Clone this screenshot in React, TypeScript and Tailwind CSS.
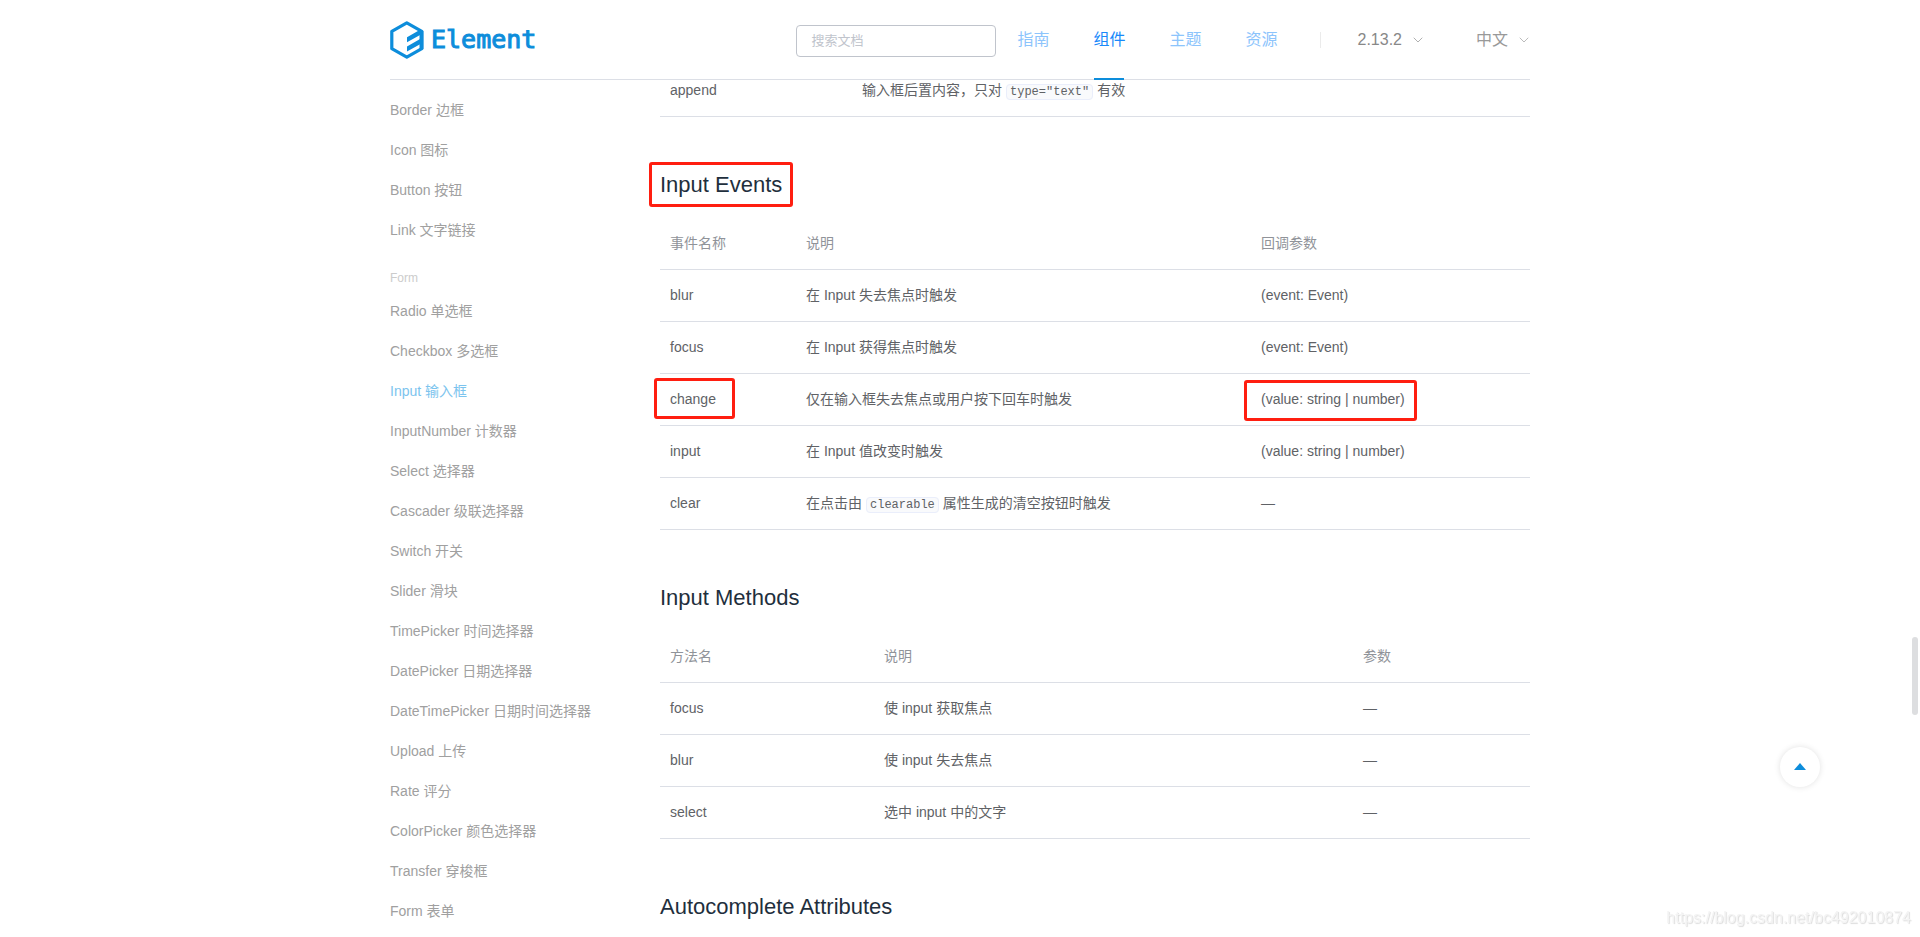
import React from 'react';
import { ChevronDown } from 'lucide-react';
import clsx from 'clsx';

interface DocTableProps {
  head?: string[];
  rows: React.ReactNode[][];
  // width classes for each column
  cols: string[];
}

const NAV = [
  { name: '指南' },
  { name: '组件', active: true },
  { name: '主题' },
  { name: '资源' },
];

const BASIC = ['Border 边框', 'Icon 图标', 'Button 按钮', 'Link 文字链接'];

const FORM = [
  'Radio 单选框',
  'Checkbox 多选框',
  'Input 输入框',
  'InputNumber 计数器',
  'Select 选择器',
  'Cascader 级联选择器',
  'Switch 开关',
  'Slider 滑块',
  'TimePicker 时间选择器',
  'DatePicker 日期选择器',
  'DateTimePicker 日期时间选择器',
  'Upload 上传',
  'Rate 评分',
  'ColorPicker 颜色选择器',
  'Transfer 穿梭框',
  'Form 表单',
];

const ACTIVE_ITEM = 'Input 输入框';

const Code = ({ children }: { children: React.ReactNode }) => (
  <code className="mx-1 rounded border border-[#eaeefb] bg-[#f9fafc] px-[3px] font-['Liberation_Mono',monospace] text-xs">
    {children}
  </code>
);

// Red frame around the marked text
const Mark = ({ frame, children }: { frame: string; children: React.ReactNode }) => (
  <span className="relative inline-block">
    {children}
    <span className={clsx('pointer-events-none absolute rounded-[3px] border-3 border-[#ff1e10]', frame)} />
  </span>
);

const DocTable = ({ head, rows, cols }: DocTableProps) => (
  <table className="w-full table-fixed border-collapse text-left text-sm leading-[21px]">
    <colgroup>
      {cols.map((c, i) => <col key={i} className={c} />)}
    </colgroup>
    {head && (
      <thead>
        <tr className="border-b border-[#dcdfe6]">
          {head.map(h => (
            <th key={h} className="px-[10px] py-[15px] font-normal text-[#909399]">{h}</th>
          ))}
        </tr>
      </thead>
    )}
    <tbody className="text-[#606266]">
      {rows.map((row, i) => (
        <tr key={i} className="border-b border-[#dcdfe6]">
          {row.map((cell, j) => (
            <td key={j} className={clsx('px-[10px] pb-[15px]', head && 'pt-[15px]')}>{cell}</td>
          ))}
        </tr>
      ))}
    </tbody>
  </table>
);

const Title = ({ children }: { children: React.ReactNode }) => (
  <h3 className="mt-[55px] mb-5 text-[22px] leading-[26px] text-[#1f2f3d]">{children}</h3>
);

const Logo = () => (
  <a href="#" className="flex items-center gap-[7px] text-[#0d8ddb]">
    <svg width="34" height="38" viewBox="0 0 34 38" fill="none">
      <path d="M16.8 1.8 L31.8 10.3 V27.7 L16.8 36.2 L1.8 27.7 V10.3 Z" stroke="currentColor" strokeWidth="3.2" strokeLinejoin="round" />
      <path d="M17 16.3 L30.5 8.5 V13.7 L17 21.3 Z M17 25.4 L30.5 17.8 V23 L17 30.6 Z" fill="currentColor" />
      <path d="M29.5 10 H33.4 V28 L29.5 29 Z" fill="currentColor" />
    </svg>
    <span className="font-['DejaVu_Sans_Mono',monospace] text-[25px] leading-8 [-webkit-text-stroke:1px_#0d8ddb]">Element</span>
  </a>
);

const Header = () => (
  <header className="mx-auto flex h-20 w-full max-w-[1140px] items-center border-b border-[#dcdfe6]">
    <Logo />
    <input
      type="text"
      aria-label="搜索文档"
      placeholder="搜索文档"
      className="mt-[2px] ml-auto h-8 w-[200px] rounded border border-[#c0c4cc] px-[14px] text-[13px] placeholder-[#c0c4cc] outline-none"
    />
    <nav className="ml-[21px] flex gap-11 self-stretch">
      {NAV.map(n => (
        <a
          key={n.name}
          href="#"
          className={clsx('relative flex h-20 items-center', n.active ? 'text-[#1989fa]' : 'text-[#8cc4fc]')}
        >
          {n.name}
          {n.active && <span className="absolute bottom-0 left-px h-[2px] w-[30px] bg-[#0d8ddb]" />}
        </a>
      ))}
    </nav>
    <span className="ml-[42px] h-4 w-px bg-[#ebebeb]" />
    <button type="button" className="ml-[37px] flex items-center gap-2 text-[#888]">
      2.13.2
      <ChevronDown size={16} strokeWidth={1} />
    </button>
    <button type="button" className="ml-[50px] flex items-center gap-2 text-[#999]">
      中文
      <ChevronDown size={16} strokeWidth={1} className="-mr-[2px]" />
    </button>
  </header>
);

const MenuItem = ({ name }: { name: string }) => (
  <li>
    <a href="#" className={clsx('block h-10 text-sm leading-10', name === ACTIVE_ITEM ? 'text-[#7cc4ee]' : 'text-[#a0a0a0]')}>
      {name}
    </a>
  </li>
);

const Sidebar = () => (
  <aside className="w-[270px] shrink-0 pt-[10px]">
    <ul>
      {BASIC.map(name => <MenuItem key={name} name={name} />)}
    </ul>
    <div className="mt-[15px] text-xs leading-[26px] text-[#ccc]">Form</div>
    <ul>
      {FORM.map(name => <MenuItem key={name} name={name} />)}
    </ul>
  </aside>
);

export default function App() {
  return (
    <div className="min-h-screen bg-white font-['Liberation_Sans','Noto_Sans_CJK_SC',sans-serif]">
      <Header />

      <div className="mx-auto flex w-full max-w-[1140px]">
        <Sidebar />

        <main className="min-w-0 flex-1">
          <DocTable
            cols={['w-[192px]', 'w-auto']}
            rows={[['append', <>输入框后置内容，只对<Code>type="text"</Code>有效</>]]}
          />

          <Title><Mark frame="-inset-x-[11px] -top-[10px] -bottom-[9px]">Input Events</Mark></Title>
          <DocTable
            cols={['w-[136px]', 'w-[455px]', 'w-auto']}
            head={['事件名称', '说明', '回调参数']}
            rows={[
              ['blur', '在 Input 失去焦点时触发', '(event: Event)'],
              ['focus', '在 Input 获得焦点时触发', '(event: Event)'],
              [
                <Mark frame="-left-4 -right-[19px] -top-[11px] -bottom-[9px]">change</Mark>,
                '仅在输入框失去焦点或用户按下回车时触发',
                <Mark frame="-left-[17px] -right-3 -top-[9px] -bottom-[11px]">(value: string | number)</Mark>,
              ],
              ['input', '在 Input 值改变时触发', '(value: string | number)'],
              ['clear', <>在点击由<Code>clearable</Code>属性生成的清空按钮时触发</>, '—'],
            ]}
          />

          <Title>Input Methods</Title>
          <DocTable
            cols={['w-[214px]', 'w-[479px]', 'w-auto']}
            head={['方法名', '说明', '参数']}
            rows={[
              ['focus', '使 input 获取焦点', '—'],
              ['blur', '使 input 失去焦点', '—'],
              ['select', '选中 input 中的文字', '—'],
            ]}
          />

          <Title>Autocomplete Attributes</Title>
        </main>
      </div>

      {/* Back to top */}
      <button
        type="button"
        aria-label="回到顶部"
        className="fixed right-[100px] bottom-[150px] flex size-10 items-center justify-center rounded-full bg-white pb-px shadow-[0_0_6px_rgba(0,0,0,0.12)]"
      >
        <svg width="12" height="7" viewBox="0 0 12 7" fill="#0d8ddb">
          <path d="M6 0 L12 7 H0 Z" />
        </svg>
      </button>

      {/* Scrollbar thumb */}
      <div className="fixed top-[68%] right-[2px] h-[78px] w-[6px] rounded-full bg-[#dddee0]" />

      <div className="fixed right-[9px] bottom-[9px] text-base leading-5 text-[#f4f4f4] [text-shadow:1px_1px_1px_#dcdcdc]">
        https://blog.csdn.net/bc492010874
      </div>
    </div>
  );
}
